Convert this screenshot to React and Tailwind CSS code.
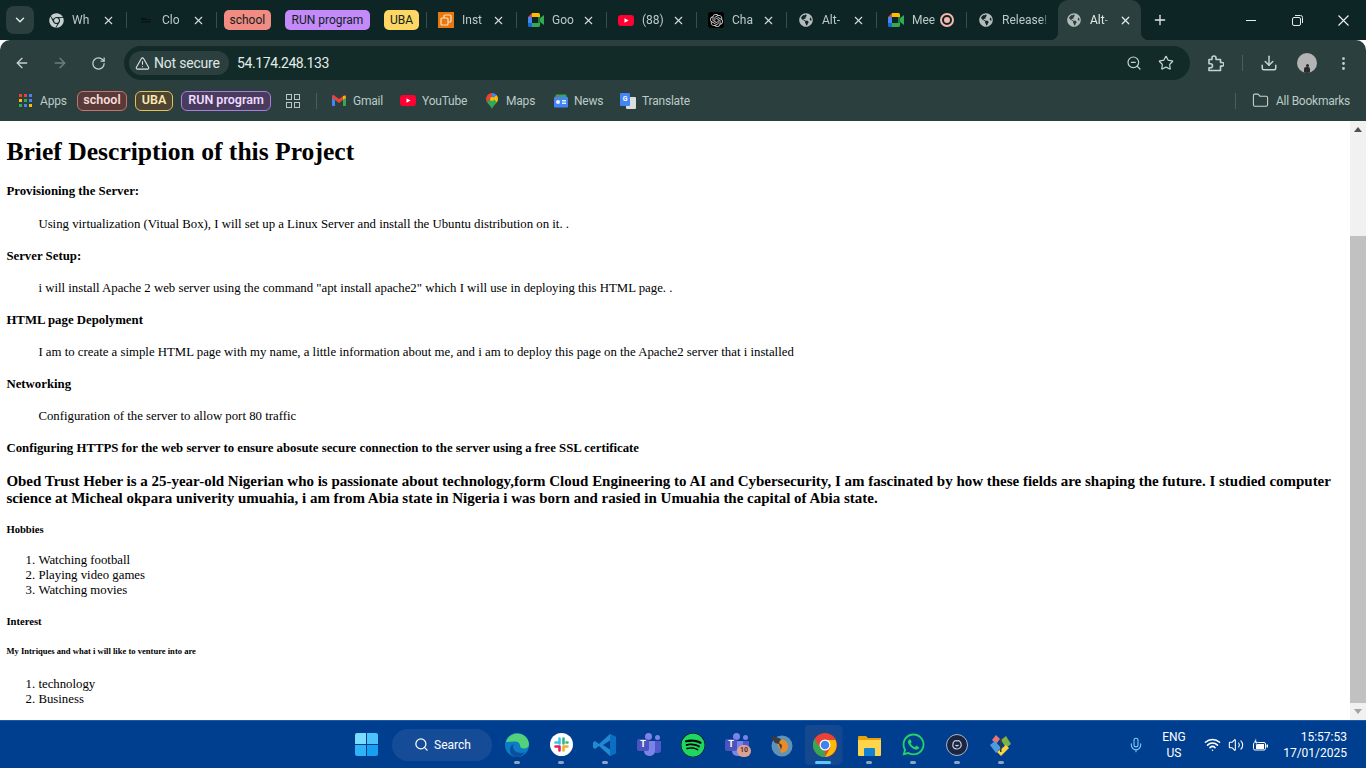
import React from "react";
import {
  ArrowLeft,
  ArrowRight,
  RotateCw,
  TriangleAlert,
  ZoomOut,
  Star,
  Download,
  EllipsisVertical,
  X,
  Plus,
  ChevronDown,
  Folder,
  Search,
  Mic,
  Wifi,
  Volume2,
} from "lucide-react";
import { FaChrome, FaGlobeAmericas, FaSpotify, FaWhatsapp } from "react-icons/fa";
import { SiOpenai } from "react-icons/si";

const MeetIcon = () => (
  <svg width="16" height="14" viewBox="0 0 16 14">
    <path d="M0 4 4 0v4z" fill="#ea4335" />
    <path d="M0 4h4v6H0z" fill="#4285f4" />
    <path d="M0 10h4v4H1.500A1.500 1.500 0 0 1 0 12.500z" fill="#1967d2" />
    <path d="M4 0h6.500A1.500 1.500 0 0 1 12 1.500V4H4z" fill="#fbbc04" />
    <path d="M4 10h8v2.500a1.500 1.500 0 0 1-1.500 1.500H4z" fill="#34a853" />
    <path d="M10 4h2v6h-2z" fill="#188038" />
    <path d="M12 5 16 2v10l-4-3z" fill="#34a853" />
  </svg>
);

const YouTubeIcon = ({ w = 16, h = 11 }) => (
  <svg width={w} height={h} viewBox="0 0 16 11" className="shrink-0">
    <rect width="16" height="11" rx="3" fill="#ff0033" />
    <path d="M6.500 3.200 10.500 5.500 6.500 7.800z" fill="#fff" />
  </svg>
);

const Ec2Icon = () => (
  <svg width="16" height="16" viewBox="0 0 16 16">
    <rect width="16" height="16" fill="#e8770f" />
    <rect x="6" y="3" width="7" height="7" rx="1" fill="none" stroke="#ffe3c4" strokeWidth="1.200" />
    <rect x="3" y="6" width="7" height="7" rx="1" fill="#e8770f" stroke="#ffe3c4" strokeWidth="1.200" />
  </svg>
);

const tabs = [
  { label: "Wh", icon: <FaChrome size={15} className="text-[#c6cfce]" /> },
  {
    label: "Clo",
    icon: (
      <svg width="16" height="16" viewBox="0 0 16 16">
        <path d="M3 6h5l1 1h4v1H3zM3 9h10v1.500H3z" fill="#0a1413" />
      </svg>
    ),
  },
];

const tabs2 = [
  { label: "Inst", icon: <Ec2Icon /> },
  { label: "Goo", icon: <MeetIcon /> },
  { label: "(88)", icon: <YouTubeIcon /> },
  {
    label: "Cha",
    icon: (
      <span className="flex h-4 w-4 items-center justify-center rounded-[3px] bg-black">
        <SiOpenai size={13} className="text-[#d5d5d5]" />
      </span>
    ),
  },
  { label: "Alt-", icon: <FaGlobeAmericas size={14} className="text-[#b4bcbb]" /> },
];

const Tab = ({ label, icon, close = true, record = false }) => (
  <div className="relative flex h-[40px] w-[90px] shrink-0 items-center pl-[11px]">
    <span className="flex h-4 w-4 shrink-0 items-center justify-center">{icon}</span>
    <span className="ml-[8px] w-[28px] overflow-hidden whitespace-nowrap text-[12px] text-[#bccac8] [mask-image:linear-gradient(to_right,black_75%,transparent)]">
      {label}
    </span>
    {close && <X size={13} strokeWidth={2} className="ml-[2px] text-[#d5dedc]" />}
    {record && (
      <span className="flex h-[14px] w-[14px] items-center justify-center rounded-full border-2 border-[#f7b7ac]">
        <span className="h-[6px] w-[6px] rounded-full bg-[#f7b7ac]" />
      </span>
    )}
    <span className="absolute right-0 top-[12px] h-[16px] w-[1px] bg-[#3a4f4d]" />
  </div>
);

const TabGroupChips = () => (
  <div className="flex h-[40px] w-[210px] shrink-0 items-center pl-[7px] text-[12px] text-[#10211f]">
    <span className="flex h-[20px] w-[47px] items-center justify-center rounded-[5px] bg-[#f28b82]">school</span>
    <span className="ml-[14px] flex h-[20px] w-[86px] items-center justify-center rounded-[5px] bg-[#c58af9]">RUN program</span>
    <span className="ml-[14px] flex h-[20px] w-[35px] items-center justify-center rounded-[5px] bg-[#fdd663]">UBA</span>
    <span className="ml-[7px] h-[16px] w-[1px] bg-[#3a4f4d]" />
  </div>
);

const ActiveTab = () => (
  <div className="relative z-10 flex h-[40px] w-[83px] shrink-0 items-center self-end rounded-t-[10px] bg-[#2b403e] pl-[9px]">
    <FaGlobeAmericas size={14} className="text-[#b4bcbb]" />
    <span className="ml-[9px] w-[20px] overflow-hidden whitespace-nowrap text-[12px] text-[#e4ecea] [mask-image:linear-gradient(to_right,black_70%,transparent)]">
      Alt-
    </span>
    <X size={13} strokeWidth={2.200} className="ml-[9px] text-[#e4ecea]" />
    <span className="absolute -left-[8px] bottom-0 h-[8px] w-[8px] bg-[radial-gradient(circle_at_0_0,transparent_8px,#2b403e_8.500px)]" />
    <span className="absolute -right-[8px] bottom-0 h-[8px] w-[8px] bg-[radial-gradient(circle_at_100%_0,transparent_8px,#2b403e_8.500px)]" />
  </div>
);

const TabStrip = () => (
  <div className="flex h-[40px] shrink-0 items-center bg-[#0d2625]">
    <div className="ml-[6px] mr-[3px] flex h-[28px] w-[28px] shrink-0 items-center justify-center rounded-[8px] bg-[#2b403e]">
      <ChevronDown size={14} strokeWidth={2.500} className="text-[#dfe7e5]" />
    </div>
    {tabs.map((t) => (
      <Tab key={t.label} {...t} />
    ))}
    <TabGroupChips />
    {tabs2.map((t) => (
      <Tab key={t.label} {...t} />
    ))}
    <Tab label="Mee" icon={<MeetIcon />} close={false} record />
    <div className="flex h-[40px] w-[91px] shrink-0 items-center pl-[11px]">
      <FaGlobeAmericas size={14} className="ml-[1px] text-[#b4bcbb]" />
      <span className="ml-[9px] w-[48px] whitespace-nowrap text-[12px] text-[#bccac8] [mask-image:linear-gradient(to_right,black_80%,transparent)]">
        Release!
      </span>
    </div>
    <ActiveTab />
    <Plus size={16} strokeWidth={2} className="ml-[11px] text-[#dfe7e5]" />
    <div className="ml-auto flex items-center text-[#e4ecea]">
      <div className="flex h-[40px] w-[46px] items-center justify-center">
        <span className="h-[1px] w-[10px] bg-[#e4ecea]" />
      </div>
      <div className="flex h-[40px] w-[46px] items-center justify-center">
        <svg width="11" height="11" viewBox="0 0 11 11" fill="none" stroke="currentColor">
          <rect x="0.500" y="2.500" width="8" height="8" rx="1.500" />
          <path d="M3 .5h5.500a2 2 0 0 1 2 2V8" />
        </svg>
      </div>
      <div className="flex h-[40px] w-[46px] items-center justify-center">
        <svg width="11" height="11" viewBox="0 0 11 11" stroke="#eef3f2" strokeWidth="1.100">
          <path d="M.5.500l10 10M10.500.500l-10 10" />
        </svg>
      </div>
    </div>
  </div>
);

const ExtensionIcon = () => (
  <svg width="16" height="17" viewBox="0 0 16 17" fill="none" stroke="currentColor" strokeWidth="1.600" strokeLinejoin="round" className="ml-[18px]">
    <path d="M1 4.500h3V3a2 2 0 0 1 4 0v1.500h4.500v3H14a1.800 1.800 0 0 1 0 3.600h-1.500V15.500H1v-2.800h1.500a2 2 0 0 0 0-4H1z" />
  </svg>
);

const AddressBar = () => (
  <div className="flex h-[40px] shrink-0 items-center rounded-t-[10px] bg-[#2b403e] pt-[6px] text-[#c6d2d0]">
    <div className="flex w-[44px] justify-center">
      <ArrowLeft size={16} strokeWidth={2} />
    </div>
    <div className="ml-[-6px] flex w-[44px] justify-center text-[#6e807e]">
      <ArrowRight size={16} strokeWidth={2} />
    </div>
    <div className="ml-[-6px] flex w-[44px] justify-center">
      <RotateCw size={15} strokeWidth={2} />
    </div>
    <div className="ml-[4px] flex h-[34px] w-[1066px] shrink-0 items-center rounded-full bg-[#122b29] pl-[5px]">
      <div className="flex h-[24px] w-[100px] items-center rounded-full bg-[#2b403e] pl-[6px] text-[14px] tracking-[-0.2px] text-[#dfe7e5]">
        <TriangleAlert size={15} strokeWidth={1.700} />
        <span className="ml-[4px]">Not secure</span>
      </div>
      <span className="ml-[8px] text-[14px] tracking-[-0.4px] text-[#e4ecea]">54.174.248.133</span>
      <ZoomOut size={16} strokeWidth={1.800} className="ml-auto text-[#c6d2d0]" />
      <Star size={16} strokeWidth={1.800} className="ml-[16px] mr-[16px] text-[#c6d2d0]" />
    </div>
    <ExtensionIcon />
    <span className="ml-[18px] h-[16px] w-[1px] bg-[#48605d]" />
    <Download size={18} strokeWidth={2} className="ml-[17px]" />
    <div className="relative ml-[19px] h-[20px] w-[20px] overflow-hidden rounded-full bg-[#b4b4b4]">
      <span className="absolute bottom-0 left-[7px] h-[6px] w-[6px] rounded-t-[2px] bg-[#2a2a2a]" />
      <span className="absolute bottom-[6px] left-[8.500px] h-[3px] w-[3px] rounded-full bg-[#2a2a2a]" />
    </div>
    <EllipsisVertical size={17} strokeWidth={2} className="ml-[18px]" />
  </div>
);

const AppsIcon = () => (
  <div className="grid h-[13px] w-[13px] grid-cols-3 gap-[1.500px]">
    {["#ea4335", "#ea4335", "#4285f4", "#fbbc04", "#34a853", "#4285f4", "#34a853", "#4285f4", "#fbbc04"].map((c, i) => (
      <span key={i} className="h-[3px] w-[3px]" style={{ backgroundColor: c }} />
    ))}
  </div>
);

const GmailIcon = () => (
  <svg width="14" height="11" viewBox="0 0 14 11" className="shrink-0">
    <path d="M0 2v8a1 1 0 0 0 1 1h2V5z" fill="#4285f4" />
    <path d="M14 2v8a1 1 0 0 1-1 1h-2V5z" fill="#34a853" />
    <path d="M3 5 0 2.500V1.500C0 .4 1.300-.3 2.200.4L7 4l4.800-3.600c.9-.7 2.200 0 2.200 1.100v1L11 5 7 8z" fill="#ea4335" />
    <path d="M11 1 14 1.500v1L11 5z" fill="#fbbc04" />
  </svg>
);

const MapsIcon = () => (
  <svg width="12" height="16" viewBox="0 0 12 16" className="shrink-0">
    <path d="M6 0a6 6 0 0 0-6 6c0 1.200.4 2.300 1 3.200L6 3.800z" fill="#ea4335" />
    <path d="M6 0a6 6 0 0 1 4.500 2L6 6z" fill="#4285f4" />
    <path d="M10.500 2A6 6 0 0 1 12 6c0 1.300-.5 2.400-1.200 3.400L6 6z" fill="#fbbc04" />
    <path d="M1 9.200 6 4l4.800 5.400C9 11.500 7 13 6 16c-1-3-3.500-4.500-5-6.800z" fill="#34a853" />
    <circle cx="6" cy="6" r="2" fill="#fbbc04" />
  </svg>
);

const NewsIcon = () => (
  <svg width="16" height="16" viewBox="0 0 16 16" className="shrink-0">
    <path d="M3 1.500h10l1 3H2z" fill="#34a853" />
    <path d="M1 4 8 2l-6 3z" fill="#ea4335" />
    <rect x="1" y="4" width="14" height="10.500" rx="1" fill="#4285f4" />
    <rect x="3" y="7" width="4" height="4" rx="2" fill="#e8f0fe" />
    <rect x="9" y="7" width="4" height="1.500" fill="#e8f0fe" />
    <rect x="9" y="9.500" width="4" height="1.500" fill="#e8f0fe" />
  </svg>
);

const TranslateIcon = () => (
  <div className="relative h-[16px] w-[16px] shrink-0">
    <span className="absolute right-0 bottom-0 h-[12px] w-[10px] rounded-[1px] bg-[#d9dedd]" />
    <span className="absolute left-0 top-0 flex h-[13px] w-[10px] items-center justify-center rounded-[1px] bg-[#4285f4] text-[7px] font-bold text-white">
      G
    </span>
  </div>
);

const BookmarkChip = ({ className, children }) => (
  <span className={`flex h-[20px] items-center justify-center rounded-[6px] border text-[12.500px] font-semibold ${className}`}>
    {children}
  </span>
);

const Bookmark = ({ icon, label, className }) => (
  <div className={`flex shrink-0 items-center whitespace-nowrap text-[12px] tracking-[-0.2px] text-[#bccac8] ${className}`}>
    {icon}
    <span>{label}</span>
  </div>
);

const BookmarksBar = () => (
  <div className="flex h-[41px] shrink-0 items-center bg-[#2b403e] pl-[19px]">
    <AppsIcon />
    <span className="ml-[8px] w-[27px] text-[12px] tracking-[-0.2px] text-[#bccac8]">Apps</span>
    <BookmarkChip className="ml-[10px] w-[50px] border-[#c8736c] bg-[#593a38] text-[#f7ddd8]">school</BookmarkChip>
    <BookmarkChip className="ml-[8px] w-[38px] border-[#e4bf5c] bg-[#4d4530] text-[#fbe9b4]">UBA</BookmarkChip>
    <BookmarkChip className="ml-[8px] w-[90px] border-[#a47fdb] bg-[#493a5e] text-[#ecdcff]">RUN program</BookmarkChip>
    <div className="ml-[15px] grid h-[14px] w-[14px] grid-cols-2 gap-[2px]">
      <span className="border-[1.500px] border-[#bac6c4]" />
      <span className="border-[1.500px] border-[#bac6c4]" />
      <span className="border-[1.500px] border-[#bac6c4]" />
      <span className="border-[1.500px] border-[#bac6c4]" />
    </div>
    <span className="ml-[16px] h-[16px] w-[1px] bg-[#48605d]" />
    <Bookmark className="ml-[15px] w-[52px] gap-[7px]" icon={<GmailIcon />} label="Gmail" />
    <Bookmark className="ml-[16px] w-[68px] gap-[6px]" icon={<YouTubeIcon />} label="YouTube" />
    <Bookmark className="ml-[18px] w-[49px] gap-[8px]" icon={<MapsIcon />} label="Maps" />
    <Bookmark className="ml-[18px] w-[50px] gap-[5px]" icon={<NewsIcon />} label="News" />
    <Bookmark className="ml-[17px] w-[69px] gap-[6px]" icon={<TranslateIcon />} label="Translate" />
    <span className="ml-auto h-[16px] w-[1px] bg-[#48605d]" />
    <Folder size={17} strokeWidth={1.500} className="ml-[16px] text-[#c6d2d0]" />
    <span className="ml-[7px] mr-[15px] w-[75px] whitespace-nowrap text-[12px] tracking-[-0.25px] text-[#bccac8]">All Bookmarks</span>
  </div>
);

const PageContent = () => (
  <div className="min-w-0 flex-1 overflow-hidden bg-white pl-[6.400px] pr-[6.400px] pt-[16px] font-['Liberation_Serif',serif] text-[12.800px] text-black">
    <h1 className="mb-[18px] text-[25.600px] font-bold leading-[29px]">Brief Description of this Project</h1>
    <h4 className="mb-[18px] font-bold leading-[15px]">Provisioning the Server:</h4>
    <p className="my-[17px] ml-[32px] leading-[15px]">
      Using virtualization (Vitual Box), I will set up a Linux Server and install the Ubuntu distribution on it. .
    </p>
    <h4 className="my-[17px] font-bold leading-[15px]">Server Setup:</h4>
    <p className="my-[17px] ml-[32px] leading-[15px]">
      i will install Apache 2 web server using the command "apt install apache2" which I will use in deploying this HTML page. .
    </p>
    <h4 className="my-[17px] font-bold leading-[15px]">HTML page Depolyment</h4>
    <p className="my-[17px] ml-[32px] leading-[15px]">
      I am to create a simple HTML page with my name, a little information about me, and i am to deploy this page on the Apache2 server that i installed
    </p>
    <h4 className="my-[17px] font-bold leading-[15px]">Networking</h4>
    <p className="my-[17px] ml-[32px] leading-[15px]">Configuration of the server to allow port 80 traffic</p>
    <h4 className="my-[17px] font-bold leading-[15px]">
      Configuring HTTPS for the web server to ensure abosute secure connection to the server using a free SSL certificate
    </h4>
    <h3 className="my-[15px] text-[14.976px] font-bold leading-[17px]">
      Obed Trust Heber is a 25-year-old Nigerian who is passionate about technology,form Cloud Engineering to AI and Cybersecurity, I am fascinated by how these fields are shaping the future. I studied computer science at Micheal okpara univerity umuahia, i am from Abia state in Nigeria i was born and rasied in Umuahia the capital of Abia state.
    </h3>
    <h5 className="mb-[17px] mt-[17px] text-[10.624px] font-bold leading-[12px]">Hobbies</h5>
    <ol className="my-[13px] list-decimal pl-[32px] leading-[15px]">
      <li>Watching football</li>
      <li>Playing video games</li>
      <li>Watching movies</li>
    </ol>
    <h5 className="mb-[18px] mt-[18px] text-[10.624px] font-bold leading-[12px]">Interest</h5>
    <h6 className="mb-[21px] text-[8.576px] font-bold leading-[10px]">My Intriques and what i will like to venture into are</h6>
    <ol className="list-decimal pl-[32px] leading-[15px]">
      <li>technology</li>
      <li>Business</li>
    </ol>
  </div>
);

const Scrollbar = () => (
  <div className="flex w-[16px] shrink-0 flex-col items-center bg-[#f1f1f1]">
    <div className="flex h-[16px] w-full items-center justify-center">
      <span className="h-0 w-0 border-x-[4px] border-b-[5px] border-x-transparent border-b-[#505050]" />
    </div>
    <div className="h-[99px] w-full" />
    <div className="w-full flex-1 bg-[#c1c1c1]" />
    <div className="flex h-[17px] w-full items-center justify-center">
      <span className="h-0 w-0 border-x-[4px] border-t-[5px] border-x-transparent border-t-[#a3a3a3]" />
    </div>
  </div>
);

const WindowsLogo = () => (
  <div className="grid h-[23px] w-[23px] grid-cols-2 gap-[1px]">
    <span className="rounded-tl-[2px] bg-[#7adcff]" />
    <span className="rounded-tr-[2px] bg-[#4cc4fb]" />
    <span className="rounded-bl-[2px] bg-[#2fb2f6]" />
    <span className="rounded-br-[2px] bg-[#18a0f0]" />
  </div>
);

const EdgeIcon = () => (
  <svg width="24" height="24" viewBox="0 0 24 24">
    <circle cx="12" cy="12" r="12" fill="#0c7cc5" />
    <path d="M1 9C3 2 10-1 16 1c5 1.500 8 6 8 10.500 0 3-3 4.500-6 4-2-.5-3-1.500-3-3 0-2-2-4-5-4-3.500 0-7 .5-9 .5z" fill="#52d17a" />
    <path d="M8 13c0 4 3 7 8 7 1.500 0 3-.5 4-1-2 3-5 5-8 5-4 0-7-3-7-7s2-5 4-6c-.500.500-1 1-1 2z" fill="#0a4fa0" />
  </svg>
);

const SlackIcon = () => (
  <span className="flex h-[23px] w-[23px] items-center justify-center rounded-full bg-white">
    <svg width="15" height="15" viewBox="0 0 15 15" strokeWidth="2.600" strokeLinecap="round">
      <path d="M5.500 1.500v5M1.500 5.500h4" stroke="#36c5f0" />
      <path d="M9.500 1.500v5M13.500 5.500h-1" stroke="#2eb67d" />
      <path d="M9.500 13.500v-4M13.500 9.500h-4" stroke="#ecb22e" />
      <path d="M5.500 13.500v-4M1.500 9.500h4" stroke="#e01e5a" />
    </svg>
  </span>
);

const VsCodeIcon = () => (
  <svg width="24" height="24" viewBox="0 0 24 24">
    <path d="M17 1 23 4v16l-6 3-11-10-4 3-2-1.500V9.500L2 8l4 3z" fill="#1f8ad2" />
    <path d="M17 1 23 4v16l-6 3z" fill="#0a6fc0" />
    <path d="M17 7.500 10 12l7 4.500z" fill="#003f8f" />
  </svg>
);

const TeamsIcon = ({ badge }) => (
  <div className="relative h-[24px] w-[24px]">
    <span className="absolute right-[1px] top-[2px] h-[5px] w-[5px] rounded-full bg-[#7b83eb]" />
    <span className="absolute left-[8px] top-0 h-[7px] w-[7px] rounded-full bg-[#7b83eb]" />
    <span className="absolute right-0 top-[8px] h-[12px] w-[8px] rounded-b-[3px] bg-[#5059c9]" />
    <span className="absolute left-[7px] top-[8px] h-[15px] w-[11px] rounded-b-[5px] bg-[#7b83eb]" />
    <span className="absolute left-0 top-[6px] flex h-[12px] w-[12px] items-center justify-center rounded-[2px] bg-[#4b53bc] text-[9px] font-bold text-white">
      T
    </span>
    {badge && (
      <span className="absolute -right-[2px] bottom-0 flex h-[12px] w-[14px] items-center justify-center rounded-full bg-[#d9a294] text-[7px] font-bold text-[#5a2d2a]">
        10
      </span>
    )}
  </div>
);

const BlenderishIcon = () => (
  <svg width="24" height="24" viewBox="0 0 24 24">
    <circle cx="13" cy="13" r="10.500" fill="#5d93b8" />
    <path d="M9 8c4-3 9-1 10 4s-3 8-7 8c0-4-5-7-3-12z" fill="#e98a2b" />
    <path d="M2 3l5 1 5 2-2 4 3 2-1 5-2-6-4-1-2-3z" fill="#3b3b3b" />
  </svg>
);

const ChromeIcon = () => (
  <svg width="24" height="24" viewBox="0 0 24 24">
    <circle cx="12" cy="12" r="12" fill="#ea4335" />
    <path d="M12 24A12 12 0 0 1 1.600 6L7 15l5 3z" fill="#34a853" />
    <path d="M12 24 17.500 14.500 12 7h10.400A12 12 0 0 1 12 24z" fill="#fbbc04" />
    <circle cx="12" cy="12" r="5.500" fill="#fff" />
    <circle cx="12" cy="12" r="4.300" fill="#3f82f0" />
  </svg>
);

const ExplorerIcon = () => (
  <svg width="25" height="24" viewBox="0 0 25 24">
    <path d="M1 4a1 1 0 0 1 1-1h7l2 2h13v6H1z" fill="#e5a50a" />
    <path d="M1 7h23v15a1 1 0 0 1-1 1H2a1 1 0 0 1-1-1z" fill="#ffd44d" />
    <path d="M7 16a1 1 0 0 1 1-1h9a1 1 0 0 1 1 1v7H7z" fill="#1382d4" />
  </svg>
);

const LensIcon = () => (
  <span className="flex h-[22px] w-[22px] items-center justify-center rounded-full border border-[#aab4c8] bg-[#1c2540]">
    <svg width="14" height="14" viewBox="0 0 14 14" fill="none" stroke="#c8d0e0" strokeWidth="1.200">
      <path d="M3 6c0-3 3-4 4-3 2-1 4 1 4 3 1 2-1 5-4 5S2 9 3 6z" />
      <path d="M5.500 7c1 1 2 1 3 0" />
    </svg>
  </span>
);

const KrakenIcon = () => (
  <svg width="24" height="24" viewBox="0 0 24 24">
    <path d="M7 2 11 6 7 11 3 7z" fill="#e9747a" />
    <path d="M12 7 17 3l5 8-5 4z" fill="#7cb342" />
    <path d="M1 12 6 8l6 7-5 5z" fill="#4f9bd9" />
    <path d="M12 16l5-4 3 3-8 8-4-4z" fill="#ffd23f" />
    <path d="M11 5h1.500v14H11z" fill="#3b3b3b" />
  </svg>
);

const taskbarApps = [
  { id: "edge", icon: <EdgeIcon />, dot: true },
  { id: "slack", icon: <SlackIcon />, dot: true },
  { id: "code", icon: <VsCodeIcon />, dot: true },
  { id: "teams", icon: <TeamsIcon />, dot: false },
  { id: "spotify", icon: <FaSpotify size={24} className="rounded-full bg-black text-[#1ed760]" />, dot: false },
  { id: "teams2", icon: <TeamsIcon badge />, dot: false },
  { id: "blender", icon: <BlenderishIcon />, dot: false },
  { id: "chrome", icon: <ChromeIcon />, active: true },
  { id: "files", icon: <ExplorerIcon />, dot: true },
  { id: "whatsapp", icon: <FaWhatsapp size={25} className="text-[#25d366]" />, dot: true },
  { id: "lens", icon: <LensIcon />, dot: true },
  { id: "kraken", icon: <KrakenIcon />, dot: true },
];

const TaskbarApp = ({ icon, dot, active }) => (
  <div className="relative flex h-[48px] w-[44px] shrink-0 items-center justify-center">
    {active && (
      <span className="absolute left-[2px] top-[4px] h-[40px] w-[36px] rounded-[4px] bg-[#14498f] shadow-[3px_0_0_-1px_#0b4591]" />
    )}
    <span className="relative">{icon}</span>
    {dot && <span className="absolute bottom-[5px] left-[19px] h-[3px] w-[6px] rounded-full bg-[#8da4c4]" />}
    {active && <span className="absolute bottom-[5px] left-[12px] h-[3px] w-[16px] rounded-full bg-[#5cc8fa]" />}
  </div>
);

const Taskbar = () => (
  <div className="flex h-[48px] shrink-0 items-center border-t border-[#1d5aa5] bg-[#003f8f] text-white">
    <div className="ml-[355px] flex items-center">
      <WindowsLogo />
    </div>
    <div className="ml-[14px] flex h-[32px] w-[100px] items-center rounded-full bg-[#164c97] pl-[22px]">
      <Search size={15} strokeWidth={2} />
      <span className="ml-[5px] text-[12px]">Search</span>
    </div>
    <div className="ml-[3px] flex">
      {taskbarApps.map((a) => (
        <TaskbarApp key={a.id} {...a} />
      ))}
    </div>
    <Mic size={16} strokeWidth={1.600} className="ml-auto text-[#7fd0f7]" />
    <div className="ml-[10px] flex w-[40px] flex-col items-center text-[12px] leading-[16px]">
      <span>ENG</span>
      <span>US</span>
    </div>
    <Wifi size={17} strokeWidth={2.200} className="ml-[10px]" />
    <Volume2 size={16} strokeWidth={1.600} className="ml-[7px]" />
    <svg width="16" height="14" viewBox="0 0 16 14" fill="none" className="ml-[8px]">
      <rect x="1.500" y="4.500" width="12" height="7.500" rx="1.500" stroke="#fff" />
      <rect x="4" y="6" width="8" height="5" fill="#fff" />
      <rect x="14.500" y="6.500" width="1.500" height="3" fill="#fff" />
      <path d="M4 0 1.500 5H4L3 8l3.500-4.500H4.500z" fill="#fff" stroke="#003f8f" strokeWidth=".6" />
    </svg>
    <div className="ml-[9px] mr-[19px] flex w-[70px] flex-col items-end text-[12px] leading-[16px]">
      <span>15:57:53</span>
      <span>17/01/2025</span>
    </div>
  </div>
);

export default function App() {
  return (
    <div className="flex h-screen w-full flex-col overflow-hidden bg-white font-['Roboto',sans-serif]">
      <TabStrip />
      <AddressBar />
      <BookmarksBar />
      <div className="flex min-h-0 flex-1">
        <PageContent />
        <Scrollbar />
      </div>
      <Taskbar />
    </div>
  );
}
